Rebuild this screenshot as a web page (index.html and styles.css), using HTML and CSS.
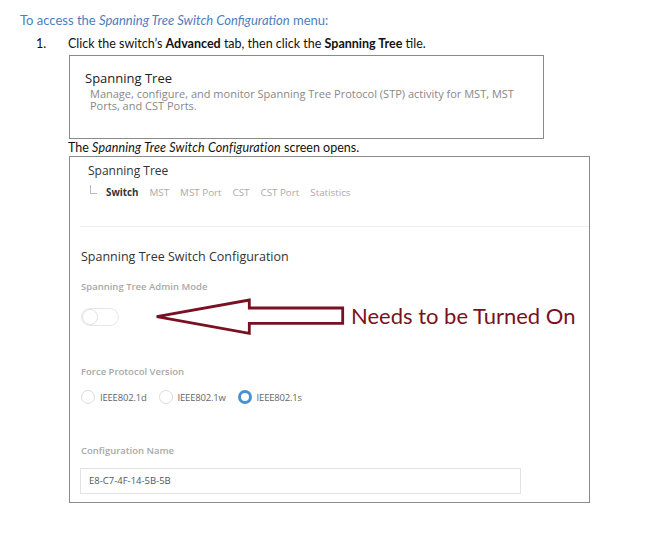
FILE: index.html
```html
<!DOCTYPE html>
<html>
<head>
<meta charset="utf-8">
<link rel="stylesheet" href="styles.css">
</head>
<body>
<p class="intro">To access the <em>Spanning Tree Switch Configuration</em> menu:</p>
<div class="step">
  <span class="num">1.</span>
  <div class="step-body">
    <p class="step-text">Click the switch’s <b>Advanced</b> tab, then click the <b>Spanning Tree</b> tile.</p>
    <div class="tile">
      <div class="tile-title">Spanning Tree</div>
      <div class="tile-desc">Manage, configure, and monitor Spanning Tree Protocol (STP) activity for MST, MST Ports, and CST Ports.</div>
    </div>
    <p class="step-text opens">The <em>Spanning Tree Switch Configuration</em> screen opens.</p>
    <div class="screen">
      <div class="screen-title">Spanning Tree</div>
      <div class="tabs">
        <span class="corner"></span>
        <span class="tab active">Switch</span>
        <span class="tab">MST</span>
        <span class="tab">MST Port</span>
        <span class="tab">CST</span>
        <span class="tab">CST Port</span>
        <span class="tab">Statistics</span>
      </div>
      <div class="sep"></div>
      <div class="section-title">Spanning Tree Switch Configuration</div>
      <div class="label">Spanning Tree Admin Mode</div>
      <div class="toggle-row">
        <span class="toggle"><span class="knob"></span></span>
        <svg class="arrow" width="192" height="38" viewBox="155 299 192 38">
          <polygon points="156.7,317.7 249.3,301 249.3,309 342.7,309 342.7,324.3 249.3,324.3 249.3,334.3" fill="none" stroke="#7a1122" stroke-width="2.8" stroke-linejoin="miter"/>
        </svg>
        <span class="note">Needs to be Turned On</span>
      </div>
      <div class="label fpv">Force Protocol Version</div>
      <div class="radios">
        <span class="radio"></span><span class="rlabel">IEEE802.1d</span>
        <span class="radio"></span><span class="rlabel">IEEE802.1w</span>
        <span class="radio on"></span><span class="rlabel">IEEE802.1s</span>
      </div>
      <div class="label cfg">Configuration Name</div>
      <div class="input">E8-C7-4F-14-5B-5B</div>
    </div>
  </div>
</div>
</body>
</html>
```

FILE: styles.css
```css
html, body { margin: 0; padding: 0; background: #fff; }
body { font-family: Lato, "Liberation Sans", sans-serif; color: #111; }
p { margin: 0; }

.intro {
  padding: 12px 0 0 20px;
  font-size: 13px;
  line-height: 16px;
  color: #4a7fc0;
}
.step {
  display: flex;
  margin-top: 8px;
  padding-left: 36px;
}
.num { width: 32px; font-size: 12.6px; line-height: 16px; }
.step-text { font-size: 12.5px; line-height: 16px; }
.step-text b { font-weight: 700; }
.opens em { letter-spacing: 0.15px; }

.tile {
  box-sizing: border-box;
  width: 475px;
  height: 84px;
  margin: 3px 0 0 1px;
  border: 1px solid #8a8a8a;
  padding: 15px 0 0 15px;
  font-family: "Open Sans", "Noto Sans", sans-serif;
}
.tile-title { font-size: 13px; line-height: 15px; color: #222; }
.tile-desc { margin-top: 2px; padding-left: 5px; width: 425px; font-size: 11px; line-height: 12px; color: #888; }

.opens { margin-top: 1px; }

.screen {
  box-sizing: border-box;
  width: 521px;
  height: 347px;
  margin: 0 0 0 1px;
  border: 1px solid #8a8a8a;
  font-family: "Open Sans", "Noto Sans", sans-serif;
}
.screen-title { padding: 5px 0 0 18px; font-size: 12px; line-height: 17px; color: #333; }
.tabs {
  display: flex;
  align-items: center;
  margin-top: 6px;
  padding-left: 20px;
  height: 14px;
  font-size: 9.8px;
  color: #aaa;
}
.corner {
  width: 6px; height: 8px;
  border-left: 1px solid #bbb;
  border-bottom: 1px solid #bbb;
  margin: -6px 9px 0 0;
}
.tab { margin-right: 11px; }
.tab.active { color: #333; font-weight: 700; }

.sep { margin: 27px 0 0 10px; border-top: 1px solid #eee; }

.section-title { padding: 21px 0 0 11px; font-size: 12.5px; line-height: 17px; color: #333; }
.label { padding: 15px 0 0 11px; font-size: 9.5px; font-weight: 600; line-height: 13px; color: #a8a8a8; }

.toggle-row {
  display: flex;
  align-items: center;
  margin-top: 5px;
  padding-left: 11px;
  height: 38px;
}
.toggle {
  box-sizing: border-box;
  width: 38px; height: 18px;
  border: 1px solid #e6e6e6;
  border-radius: 9px;
  position: relative;
  background: #fff;
}
.knob {
  position: absolute;
  left: 0; top: 0;
  width: 16px; height: 16px;
  box-sizing: border-box;
  border: 1px solid #e3e3e3;
  border-radius: 50%;
  background: #fff;
}
.arrow { margin-left: 36px; display: block; }
.note {
  margin: 0 0 4px 4px;
  font-family: Lato, "Liberation Sans", sans-serif;
  font-size: 22px;
  color: #7a1122;
}

.fpv { padding-top: 29px; }
.radios {
  display: flex;
  align-items: center;
  margin-top: 12px;
  padding-left: 11px;
  font-size: 9.5px;
  color: #666;
}
.radio {
  box-sizing: border-box;
  width: 14px; height: 14px;
  border: 1px solid #ddd;
  border-radius: 50%;
  margin-right: 5px;
}
.radio.on { border: 3px solid #4a90d9; }
.rlabel { margin-right: 12px; letter-spacing: -0.2px; }

.cfg { padding-top: 40px; }
.input {
  box-sizing: border-box;
  width: 441px;
  height: 26px;
  margin: 11px 0 0 10px;
  border: 1px solid #e3e3e3;
  padding: 0 0 0 8px;
  font-size: 9.5px;
  line-height: 24px;
  color: #555;
}
```
